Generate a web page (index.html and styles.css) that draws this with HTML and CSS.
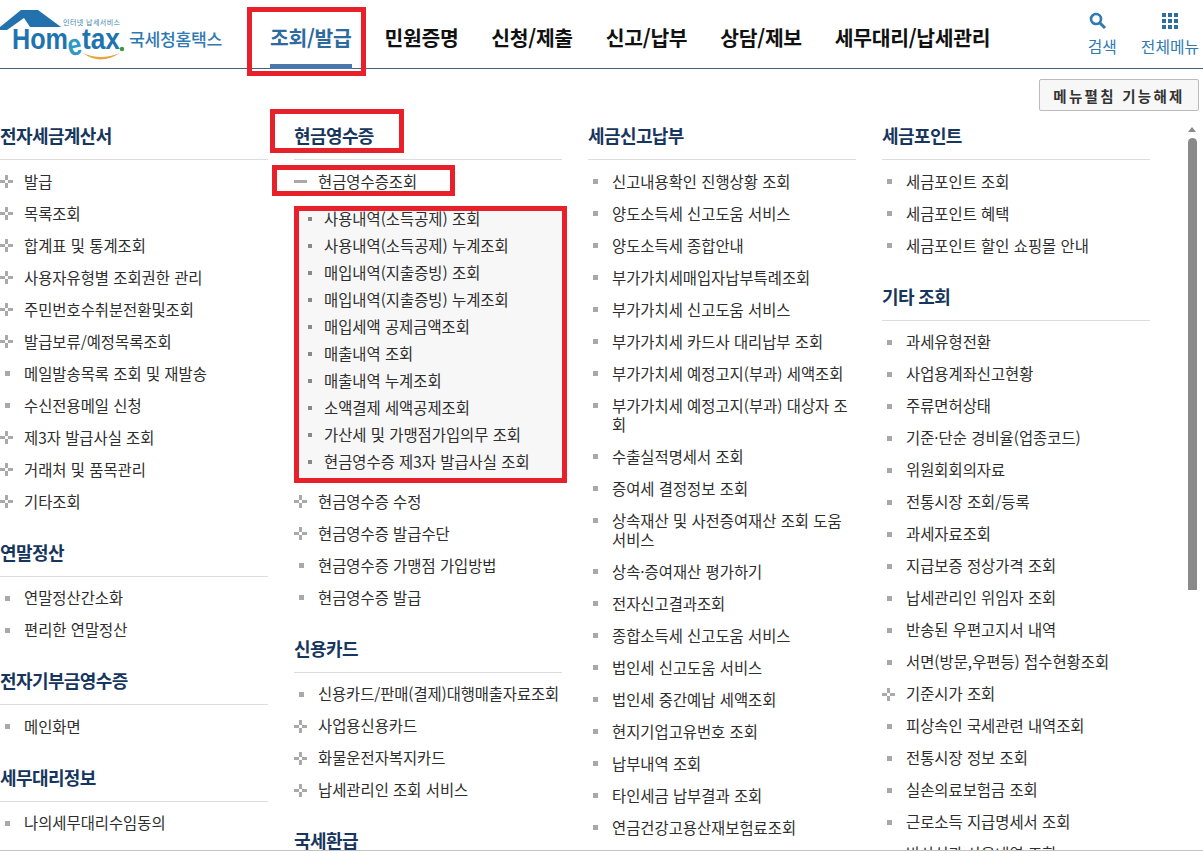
FILE: index.html
```html
<!DOCTYPE html>
<html lang="ko">
<head>
    <meta charset="UTF-8">
    <title>Hometax</title>
    <link rel="stylesheet" href="styles.css">
</head>
<body>
    <header class="top">
        <a class="logo" href="#">
            <svg class="logo-mark" width="127" height="64" viewBox="0 0 127 64">
                <path d="M21 10 H38 L61 27 H30 L24 18 L7 30 H0 V27 Z" fill="#2472ad"/>
                <path d="M83 53 Q100 66 120 53 Q100 61 83 53 Z" fill="#e8a33c"/>
                <circle cx="122" cy="49" r="2.2" fill="#3c9a3c"/>
                <text class="logo-sub" x="63" y="25" textLength="57">인터넷 납세서비스</text>
                <text class="logo-en" x="12" y="49" textLength="56" lengthAdjust="spacingAndGlyphs">Hom</text>
                <text class="logo-e" x="68" y="55" textLength="14" lengthAdjust="spacingAndGlyphs" transform="rotate(-12 75 48)">e</text>
                <text class="logo-en" x="82" y="49" textLength="38" lengthAdjust="spacingAndGlyphs">tax</text>
            </svg>
            <span class="logo-name">국세청홈택스</span>
        </a>
        <nav class="gnb">
            <a class="on" href="#">조회/발급</a>
            <a href="#">민원증명</a>
            <a href="#">신청/제출</a>
            <a href="#">신고/납부</a>
            <a href="#">상담/제보</a>
            <a href="#">세무대리/납세관리</a>
        </nav>
        <div class="utils">
            <a class="util-search" href="#">
                <svg width="18" height="18" viewBox="0 0 18 18"><circle cx="7" cy="7" r="5" fill="none" stroke="#2f7ab0" stroke-width="2.6"/><path d="M10.5 10.5 L16 16" stroke="#2f7ab0" stroke-width="3"/></svg>
                <span>검색</span>
            </a>
            <a href="#">
                <svg width="18" height="18" viewBox="0 0 18 18" fill="#2f6f9f"><rect x="1" y="1" width="4" height="4"/><rect x="7" y="1" width="4" height="4"/><rect x="13" y="1" width="4" height="4"/><rect x="1" y="7" width="4" height="4"/><rect x="7" y="7" width="4" height="4"/><rect x="13" y="7" width="4" height="4"/><rect x="1" y="13" width="4" height="4"/><rect x="7" y="13" width="4" height="4"/><rect x="13" y="13" width="4" height="4"/></svg>
                <span>전체메뉴</span>
            </a>
        </div>
    </header>

    <div class="toolbar">
        <button class="fold-btn" type="button">메뉴펼침 기능해제</button>
    </div>

    <div class="body-wrap">
        <main class="columns">
            <div class="col">
                <section>
                    <h2>전자세금계산서</h2>
                    <ul>
                        <li class="plus">발급</li>
                        <li class="plus">목록조회</li>
                        <li class="plus">합계표 및 통계조회</li>
                        <li class="plus">사용자유형별 조회권한 관리</li>
                        <li class="plus">주민번호수취분전환및조회</li>
                        <li class="plus">발급보류/예정목록조회</li>
                        <li>메일발송목록 조회 및 재발송</li>
                        <li>수신전용메일 신청</li>
                        <li class="plus">제3자 발급사실 조회</li>
                        <li class="plus">거래처 및 품목관리</li>
                        <li class="plus">기타조회</li>
                    </ul>
                </section>
                <section>
                    <h2>연말정산</h2>
                    <ul>
                        <li>연말정산간소화</li>
                        <li>편리한 연말정산</li>
                    </ul>
                </section>
                <section>
                    <h2>전자기부금영수증</h2>
                    <ul>
                        <li>메인화면</li>
                    </ul>
                </section>
                <section>
                    <h2>세무대리정보</h2>
                    <ul>
                        <li>나의세무대리수임동의</li>
                    </ul>
                </section>
            </div>

            <div class="col">
                <section>
                    <h2>현금영수증</h2>
                    <ul>
                        <li class="minus">현금영수증조회
                            <ul class="sub">
                                <li>사용내역(소득공제) 조회</li>
                                <li>사용내역(소득공제) 누계조회</li>
                                <li>매입내역(지출증빙) 조회</li>
                                <li>매입내역(지출증빙) 누계조회</li>
                                <li>매입세액 공제금액조회</li>
                                <li>매출내역 조회</li>
                                <li>매출내역 누계조회</li>
                                <li>소액결제 세액공제조회</li>
                                <li>가산세 및 가맹점가입의무 조회</li>
                                <li>현금영수증 제3자 발급사실 조회</li>
                            </ul>
                        </li>
                        <li class="plus">현금영수증 수정</li>
                        <li class="plus">현금영수증 발급수단</li>
                        <li>현금영수증 가맹점 가입방법</li>
                        <li>현금영수증 발급</li>
                    </ul>
                </section>
                <section>
                    <h2>신용카드</h2>
                    <ul>
                        <li class="tight">신용카드/판매(결제)대행매출자료조회</li>
                        <li class="plus">사업용신용카드</li>
                        <li class="plus">화물운전자복지카드</li>
                        <li class="plus">납세관리인 조회 서비스</li>
                    </ul>
                </section>
                <section>
                    <h2>국세환급</h2>
                </section>
            </div>

            <div class="col">
                <section>
                    <h2>세금신고납부</h2>
                    <ul>
                        <li>신고내용확인 진행상황 조회</li>
                        <li>양도소득세 신고도움 서비스</li>
                        <li>양도소득세 종합안내</li>
                        <li>부가가치세매입자납부특례조회</li>
                        <li>부가가치세 신고도움 서비스</li>
                        <li>부가가치세 카드사 대리납부 조회</li>
                        <li>부가가치세 예정고지(부과) 세액조회</li>
                        <li>부가가치세 예정고지(부과) 대상자 조회</li>
                        <li>수출실적명세서 조회</li>
                        <li>증여세 결정정보 조회</li>
                        <li>상속재산 및 사전증여재산 조회 도움 서비스</li>
                        <li>상속·증여재산 평가하기</li>
                        <li>전자신고결과조회</li>
                        <li>종합소득세 신고도움 서비스</li>
                        <li>법인세 신고도움 서비스</li>
                        <li>법인세 중간예납 세액조회</li>
                        <li>현지기업고유번호 조회</li>
                        <li>납부내역 조회</li>
                        <li>타인세금 납부결과 조회</li>
                        <li>연금건강고용산재보험료조회</li>
                    </ul>
                </section>
            </div>

            <div class="col">
                <section>
                    <h2>세금포인트</h2>
                    <ul>
                        <li>세금포인트 조회</li>
                        <li>세금포인트 혜택</li>
                        <li>세금포인트 할인 쇼핑몰 안내</li>
                    </ul>
                </section>
                <section>
                    <h2>기타 조회</h2>
                    <ul>
                        <li>과세유형전환</li>
                        <li>사업용계좌신고현황</li>
                        <li>주류면허상태</li>
                        <li>기준·단순 경비율(업종코드)</li>
                        <li>위원회회의자료</li>
                        <li>전통시장 조회/등록</li>
                        <li>과세자료조회</li>
                        <li>지급보증 정상가격 조회</li>
                        <li>납세관리인 위임자 조회</li>
                        <li>반송된 우편고지서 내역</li>
                        <li>서면(방문,우편등) 접수현황조회</li>
                        <li class="plus">기준시가 조회</li>
                        <li>피상속인 국세관련 내역조회</li>
                        <li>전통시장 정보 조회</li>
                        <li>실손의료보험금 조회</li>
                        <li>근로소득 지급명세서 조회</li>
                        <li>방사선과 사용내역 조회</li>
                    </ul>
                </section>
            </div>
        </main>
        <div class="scrollbar">
            <span class="arrow"></span>
            <span class="thumb"></span>
        </div>
    </div>

    <!-- annotations drawn on the capture -->
    <div class="mark mark-nav"></div>
    <div class="mark mark-title"></div>
    <div class="mark mark-item"></div>
    <div class="mark mark-sub"></div>
</body>
</html>
```

FILE: styles.css
```css
* {
    margin: 0;
    padding: 0;
    box-sizing: border-box;
}

html, body {
    height: 851px;
    overflow: hidden;
}

body {
    font-family: "Noto Sans CJK KR", "Noto Sans", sans-serif;
    font-size: 15.4px;
    color: #2e2e2e;
    background: #fff;
    display: flex;
    flex-direction: column;
    position: relative;
    border-bottom: 1px solid #c4c4c4;
}

a {
    color: inherit;
    text-decoration: none;
}

ul {
    list-style: none;
}

/* header */
.top {
    height: 69px;
    flex: none;
    display: flex;
    align-items: stretch;
    border-bottom: 1px solid #44607a;
}

.logo {
    width: 270px;
    display: flex;
    align-items: flex-start;
}

.logo-mark {
    flex: none;
}

.logo-sub {
    font-size: 7px;
    fill: #3a7fb0;
}

.logo-en {
    font-family: "Liberation Sans", sans-serif;
    font-size: 29px;
    font-weight: bold;
    fill: #1f74b0;
}

.logo-e {
    font-family: "Liberation Sans", sans-serif;
    font-size: 30px;
    font-weight: bold;
    fill: #2f9ac4;
}

.logo-name {
    font-size: 17.2px;
    font-weight: 500;
    line-height: 24px;
    color: #2f7ab0;
    margin: 27px 0 0 2px;
    letter-spacing: -0.3px;
    white-space: nowrap;
}

.gnb {
    flex: 1;
    display: flex;
    gap: 33px;
    font-size: 20.4px;
    font-weight: 700;
    color: #111;
}

.gnb a {
    line-height: 74px;
    height: 69px;
    letter-spacing: -0.3px;
    white-space: nowrap;
}

.gnb .on {
    color: #2d6a9f;
    border-bottom: 5px solid #4a78ad;
}

.utils {
    display: flex;
    gap: 24px;
    padding: 12px 4px 0 0;
    font-size: 15.8px;
    color: #2f7ab0;
}

.utils a {
    display: flex;
    flex-direction: column;
    align-items: center;
}

.util-search svg {
    align-self: flex-start;
    margin-left: 1px;
}

.utils span {
    line-height: 22px;
    margin-top: 6px;
}

/* fold button */
.toolbar {
    flex: none;
    height: 54px;
    display: flex;
    justify-content: flex-end;
    align-items: flex-start;
    padding: 10px 4px 0 0;
}

.fold-btn {
    width: 160px;
    height: 32px;
    font-family: inherit;
    font-size: 14.5px;
    font-weight: 700;
    letter-spacing: 2.3px;
    color: #333;
    background: #f7f7f7;
    border: 1px solid #bbb;
    border-radius: 2px;
}

/* menu */
.body-wrap {
    flex: 1;
    min-height: 0;
    display: flex;
    overflow: hidden;
}

.columns {
    flex: 1;
    display: grid;
    grid-template-columns: repeat(4, 268px);
    column-gap: 26px;
    align-content: start;
}

section {
    margin-bottom: 21.5px;
}

h2 {
    height: 37px;
    line-height: 24px;
    font-size: 18px;
    font-weight: 700;
    letter-spacing: -0.6px;
    color: #17365d;
    border-bottom: 1px solid #ddd;
}

h2 + ul {
    margin-top: 6px;
}

.col > section > ul > li {
    position: relative;
    padding: 5.5px 0 7.5px 24px;
    line-height: 19px;
}

.col > section > ul > li.tight {
    letter-spacing: -0.1px;
}

.col > section > ul > li::before {
    content: "";
    position: absolute;
    left: 5px;
    top: 13px;
    width: 5px;
    height: 5px;
    background: #a9a9a9;
}

.col > section > ul > li.plus::before {
    left: 0;
    top: 9px;
    width: 13px;
    height: 13px;
    background:
        linear-gradient(#aaa, #aaa) left center / 5px 3px no-repeat,
        linear-gradient(#aaa, #aaa) right center / 5px 3px no-repeat,
        linear-gradient(#aaa, #aaa) center top / 3px 5px no-repeat,
        linear-gradient(#aaa, #aaa) center bottom / 3px 5px no-repeat;
}

.col > section > ul > li.minus::before {
    top: 14px;
    left: 0;
    width: 13px;
    height: 3px;
}

.sub {
    height: 274px;
    margin: 14px 0 0 -24px;
    padding-left: 6px;
    background: #f7f7f7;
}

.sub li {
    position: relative;
    height: 27px;
    line-height: 27px;
    padding-left: 24px;
}

.sub li::before {
    content: "";
    position: absolute;
    left: 8px;
    top: 12px;
    width: 4px;
    height: 4px;
    background: #888;
}

/* custom scrollbar */
.scrollbar {
    flex: none;
    width: 16px;
    margin-right: 3px;
    display: flex;
    flex-direction: column;
    align-items: center;
}

.arrow {
    width: 0;
    height: 0;
    margin-top: 4px;
    border: 4px solid transparent;
    border-top: 0;
    border-bottom: 5px solid #8a8a8a;
}

.thumb {
    width: 9px;
    height: 452px;
    margin-top: 6px;
    background: #8a8a8a;
    border-radius: 5px 5px 0 0;
}

/* red annotation boxes */
.mark {
    position: absolute;
    border: 5px solid #e8202a;
    pointer-events: none;
}

.mark-nav {
    left: 247px;
    top: 7px;
    width: 119px;
    height: 69px;
}

.mark-title {
    left: 270px;
    top: 109px;
    width: 134px;
    height: 44px;
}

.mark-item {
    left: 272px;
    top: 165px;
    width: 183px;
    height: 31px;
}

.mark-sub {
    left: 294px;
    top: 206px;
    width: 273px;
    height: 277px;
}
```
